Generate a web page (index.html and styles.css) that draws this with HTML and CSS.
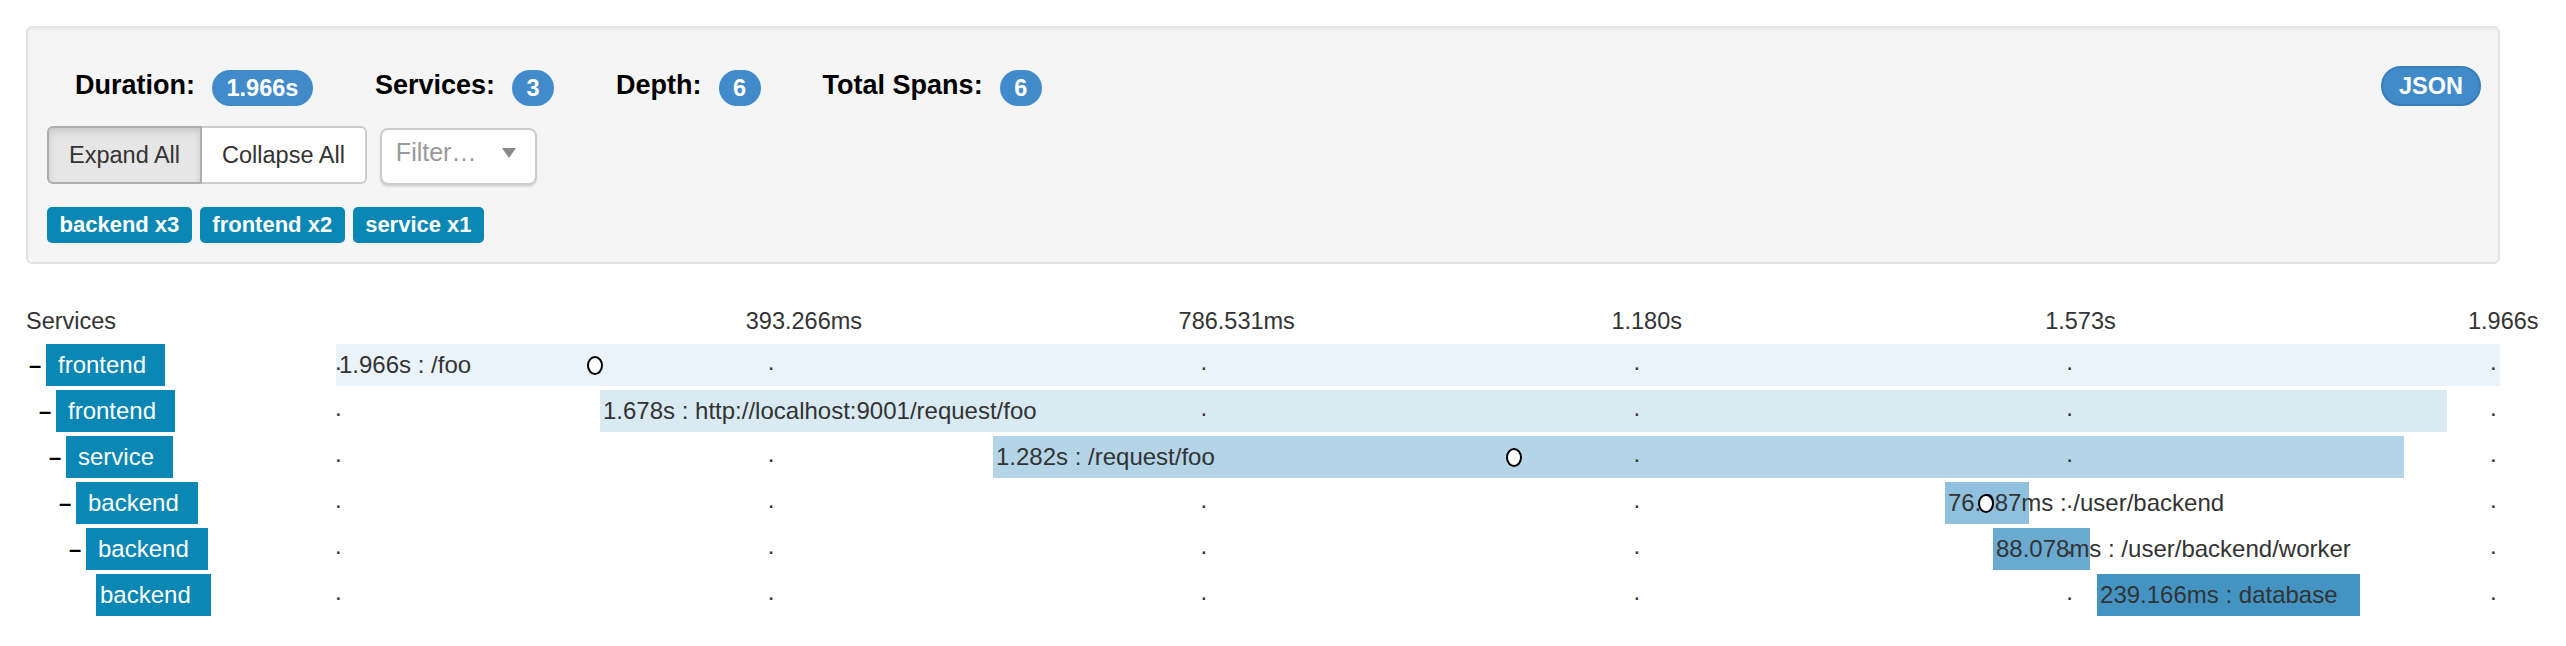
FILE: index.html
```html
<!DOCTYPE html>
<html>
<head>
<meta charset="utf-8">
<title>Trace</title>
<link rel="stylesheet" href="styles.css">
</head>
<body>
<div class="page">
  <div class="well">
    <div class="summary">
      <div class="stat first"><span class="stat-label">Duration:</span><span class="badge">1.966s</span></div>
      <div class="stat"><span class="stat-label">Services:</span><span class="badge">3</span></div>
      <div class="stat"><span class="stat-label">Depth:</span><span class="badge">6</span></div>
      <div class="stat"><span class="stat-label">Total Spans:</span><span class="badge">6</span></div>
      <button class="json-btn">JSON</button>
    </div>
    <div class="controls">
      <div class="btn-group">
        <button class="btn active">Expand All</button>
        <button class="btn">Collapse All</button>
      </div>
      <div class="filter">
        <span class="placeholder">Filter…</span>
        <svg class="caret" width="14" height="10" viewBox="0 0 14 10"><polygon points="0,0 14,0 7,10" fill="#8a8a8a"/></svg>
      </div>
    </div>
    <div class="tags">
      <span class="tag">backend x3</span>
      <span class="tag">frontend x2</span>
      <span class="tag">service x1</span>
    </div>
  </div>

  <div class="trace">
    <div class="trace-header">
      <div class="col-services">Services</div>
      <div class="axis">
        <span class="tick t1">393.266ms</span>
        <span class="tick t2">786.531ms</span>
        <span class="tick t3">1.180s</span>
        <span class="tick t4">1.573s</span>
        <span class="tick t5">1.966s</span>
      </div>
    </div>

    <div class="span-row">
      <div class="svc lvl0"><span class="expander">–</span><span class="svc-name">frontend</span></div>
      <div class="track">
        <div class="bar c1" style="left:0%;width:100%"><span class="bar-text">1.966s : /foo</span></div>
        <span class="mark m0">.</span><span class="mark m1">.</span><span class="mark m2">.</span><span class="mark m3">.</span><span class="mark m4">.</span><span class="mark m5">.</span>
        <span class="anno" style="left:11.6%"></span>
      </div>
    </div>

    <div class="span-row">
      <div class="svc lvl1"><span class="expander">–</span><span class="svc-name">frontend</span></div>
      <div class="track">
        <div class="bar c2" style="left:12.2%;width:85.35%"><span class="bar-text">1.678s : http://localhost:9001/request/foo</span></div>
        <span class="mark m0">.</span><span class="mark m1">.</span><span class="mark m2">.</span><span class="mark m3">.</span><span class="mark m4">.</span><span class="mark m5">.</span>
      </div>
    </div>

    <div class="span-row">
      <div class="svc lvl2"><span class="expander">–</span><span class="svc-name">service</span></div>
      <div class="track">
        <div class="bar c3" style="left:30.36%;width:65.21%"><span class="bar-text">1.282s : /request/foo</span></div>
        <span class="mark m0">.</span><span class="mark m1">.</span><span class="mark m2">.</span><span class="mark m3">.</span><span class="mark m4">.</span><span class="mark m5">.</span>
        <span class="anno" style="left:54.07%"></span>
      </div>
    </div>

    <div class="span-row">
      <div class="svc lvl3"><span class="expander">–</span><span class="svc-name">backend</span></div>
      <div class="track">
        <div class="bar c4" style="left:74.35%;width:3.87%"><span class="bar-text">76.087ms : /user/backend</span></div>
        <span class="mark m0">.</span><span class="mark m1">.</span><span class="mark m2">.</span><span class="mark m3">.</span><span class="mark m4">.</span><span class="mark m5">.</span>
        <span class="anno" style="left:75.88%"></span>
      </div>
    </div>

    <div class="span-row">
      <div class="svc lvl4"><span class="expander">–</span><span class="svc-name">backend</span></div>
      <div class="track">
        <div class="bar c5" style="left:76.57%;width:4.48%"><span class="bar-text">88.078ms : /user/backend/worker</span></div>
        <span class="mark m0">.</span><span class="mark m1">.</span><span class="mark m2">.</span><span class="mark m3">.</span><span class="mark m4">.</span><span class="mark m5">.</span>
      </div>
    </div>

    <div class="span-row">
      <div class="svc lvl5"><span class="expander"></span><span class="svc-name leaf">backend</span></div>
      <div class="track">
        <div class="bar c6" style="left:81.38%;width:12.165%"><span class="bar-text">239.166ms : database</span></div>
        <span class="mark m0">.</span><span class="mark m1">.</span><span class="mark m2">.</span><span class="mark m3">.</span><span class="mark m4">.</span><span class="mark m5">.</span>
      </div>
    </div>
  </div>
</div>
</body>
</html>
```

FILE: styles.css
```css
* { box-sizing: border-box; }

html, body {
  margin: 0;
  padding: 0;
  background: #fff;
}

body {
  font-family: "Liberation Sans", Arial, sans-serif;
  font-size: 23.5px;
  color: #333;
}

.page {
  width: 2566px;
  padding: 26px 66px 0 26px;
}

/* ---------- summary well ---------- */
.well {
  background: #f5f5f5;
  border: 2px solid #e3e3e3;
  border-radius: 6px;
  box-shadow: inset 0 2px 2px rgba(0, 0, 0, 0.05);
  padding: 19px 17px 19px 19px;
}

.summary {
  display: flex;
  align-items: center;
  height: 40px;
  margin-top: 19px;
}

.stat {
  display: flex;
  align-items: center;
  gap: 17px;
  margin-right: 62px;
}

.stat.first {
  padding-left: 28px;
}

.stat-label {
  font-size: 27px;
  font-weight: bold;
  color: #000;
  line-height: 40px;
  margin-top: -2px;
}

.badge {
  display: inline-block;
  height: 36px;
  line-height: 36px;
  margin-top: 4px;
  padding: 0 14.5px;
  border-radius: 18px;
  background: #428bca;
  color: #fff;
  font-size: 23.5px;
  font-weight: bold;
}

.json-btn {
  margin-left: auto;
  height: 40px;
  padding: 0 16px;
  border: 2px solid #357ebd;
  border-radius: 20px;
  background: #428bca;
  color: #fff;
  font-family: inherit;
  font-size: 23.5px;
  font-weight: bold;
  line-height: 36px;
}

.controls {
  display: flex;
  align-items: center;
  margin-top: 20px;
  height: 58px;
}

.btn-group {
  display: flex;
}

.btn {
  height: 58px;
  padding: 10px 20px;
  border: 2px solid #ccc;
  background: #fff;
  color: #333;
  font-family: inherit;
  font-size: 23.5px;
  line-height: 34px;
  margin: 0;
}

.btn:first-child {
  border-radius: 6px 0 0 6px;
}

.btn:last-child {
  border-radius: 0 6px 6px 0;
  margin-left: -2px;
}

.btn.active {
  background: #e6e6e6;
  border-color: #adadad;
  box-shadow: inset 0 4px 7px rgba(0, 0, 0, 0.125);
  position: relative;
  z-index: 1;
}

.filter {
  display: flex;
  align-items: center;
  justify-content: space-between;
  width: 157px;
  height: 57px;
  margin-left: 13px;
  margin-top: 2px;
  padding: 0 19px 8px 14px;
  border: 2px solid #ccc;
  border-radius: 8px;
  background: #fff;
  box-shadow: 0 2px 2px rgba(0, 0, 0, 0.12);
}

.placeholder {
  color: #999;
  font-size: 25px;
}

.caret {
  display: block;
  margin-top: 2px;
}

.tags {
  display: flex;
  gap: 8px;
  margin-top: 23px;
}

.tag {
  display: inline-block;
  height: 36px;
  line-height: 36px;
  padding: 0 12.5px;
  border-radius: 5px;
  background: #0a87b4;
  color: #fff;
  font-size: 22px;
  font-weight: bold;
}

/* ---------- trace timeline ---------- */
.trace {
  margin-top: 39px;
}

.trace-header {
  display: flex;
  height: 41px;
}

.col-services {
  width: 310px;
  line-height: 36px;
}

.axis {
  position: relative;
  flex: 1;
}

.tick {
  position: absolute;
  top: 0;
  line-height: 36px;
  white-space: nowrap;
}

.t1 { left: calc(20% - 23px); }
.t2 { left: calc(40% - 23px); }
.t3 { left: calc(60% - 23px); }
.t4 { left: calc(80% - 22px); }
.t5 { left: calc(100% - 32px); }

.span-row {
  display: flex;
  height: 42px;
  margin-bottom: 4px;
  font-size: 24px;
}

.svc {
  width: 310px;
  display: flex;
  align-items: center;
  flex-shrink: 0;
}

.lvl0 { padding-left: 3px; }
.lvl1 { padding-left: 13px; }
.lvl2 { padding-left: 23px; }
.lvl3 { padding-left: 33px; }
.lvl4 { padding-left: 43px; }
.lvl5 { padding-left: 53px; }

.expander {
  width: 17px;
  flex-shrink: 0;
  font-size: 22px;
  font-weight: bold;
  color: #000;
  line-height: 42px;
  margin-top: 2px;
}

.svc-name {
  height: 42px;
  line-height: 42px;
  padding: 0 19px 0 12px;
  background: #0a87b4;
  color: #fff;
  white-space: nowrap;
}

.svc-name.leaf {
  padding: 0 20px 0 4px;
}

.track {
  position: relative;
  flex: 1;
}

.bar {
  position: absolute;
  top: 0;
  height: 42px;
}

.c1 { background: #eaf3fa; }
.c2 { background: #d9eaf3; }
.c3 { background: #b4d5e8; }
.c4 { background: #8fc1de; }
.c5 { background: #6aaad1; }
.c6 { background: #4393c3; }

.bar-text {
  display: block;
  padding-left: 3px;
  line-height: 42px;
  white-space: nowrap;
  color: #333;
}

.mark {
  position: absolute;
  top: -3px;
  line-height: 42px;
  color: #333;
}

.m0 { left: -1px; }
.m1 { left: calc(20% - 1px); }
.m2 { left: calc(40% - 1px); }
.m3 { left: calc(60% - 1px); }
.m4 { left: calc(80% - 1px); }
.m5 { left: calc(100% - 10px); }

.anno {
  position: absolute;
  top: 12px;
  width: 16px;
  height: 19px;
  border: 2px solid #000;
  border-radius: 50%;
  background: #fff;
}
```
